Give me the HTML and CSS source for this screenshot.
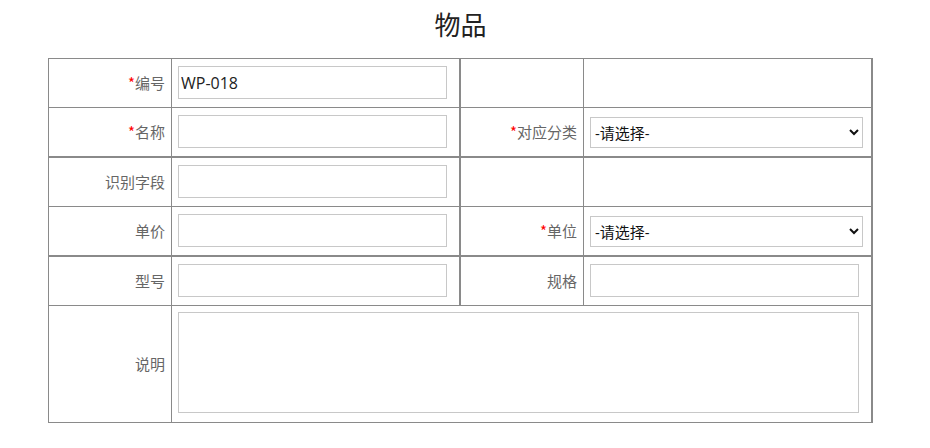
FILE: index.html
```html
<!DOCTYPE html>
<html lang="zh-CN">
<head>
<meta charset="utf-8">
<title>物品</title>
<link rel="stylesheet" href="styles.css">
</head>
<body>
<div class="page">
  <h1 class="title">物品</h1>
  <div class="form-grid">
    <div class="cell label r1"><span class="req">*</span>编号</div>
    <div class="cell field thick-r r1"><input class="txt" type="text" value="WP-018"></div>
    <div class="cell label r1"></div>
    <div class="cell field thick-r r1"></div>

    <div class="cell label r2"><span class="req">*</span>名称</div>
    <div class="cell field thick-r r2"><input class="txt" type="text"></div>
    <div class="cell label r2"><span class="req">*</span>对应分类</div>
    <div class="cell field sel-cell thick-r r2"><select class="sel"><option>-请选择-</option></select></div>

    <div class="cell label r1">识别字段</div>
    <div class="cell field thick-r r1"><input class="txt" type="text"></div>
    <div class="cell label r1"></div>
    <div class="cell field thick-r r1"></div>

    <div class="cell label r2">单价</div>
    <div class="cell field thick-r r2"><input class="txt" type="text"></div>
    <div class="cell label r2"><span class="req">*</span>单位</div>
    <div class="cell field sel-cell thick-r r2"><select class="sel"><option>-请选择-</option></select></div>

    <div class="cell label r1">型号</div>
    <div class="cell field thick-r r1"><input class="txt" type="text"></div>
    <div class="cell label r1">规格</div>
    <div class="cell field thick-r r1"><input class="txt" type="text"></div>

    <div class="cell label r1">说明</div>
    <div class="cell field area-cell thick-r r1"><textarea class="area"></textarea></div>
  </div>
</div>
</body>
</html>
```

FILE: styles.css
```css
html, body {
  margin: 0;
  padding: 0;
  background: #fff;
}

body {
  font-family: "Noto Sans CJK SC", "Noto Sans", sans-serif;
  color: #333;
}

.page {
  width: 825px;
  margin-left: 48px;
}

.title {
  margin: 0;
  padding: 6px 0 16px;
  font-size: 26px;
  line-height: 36px;
  font-weight: normal;
  text-align: center;
  color: #222;
}

.form-grid {
  display: grid;
  grid-template-columns: 123px 289px 123px 289px;
  grid-template-rows: 49px 50px 49px 50px 49px 117px;
  border-left: 1px solid #8a8a8a;
  border-top: 1px solid #8a8a8a;
  width: 825px;
  box-sizing: border-box;
}

.cell {
  box-sizing: border-box;
  border-right: 1px solid #8a8a8a;
  border-bottom: 1px solid #8a8a8a;
  display: flex;
  align-items: center;
}

.cell.r2 {
  border-bottom-width: 2px;
}

.cell.thick-r {
  border-right-width: 2px;
}

.label {
  justify-content: flex-end;
  padding-right: 6px;
  padding-bottom: 2px;
  font-size: 15px;
  color: #666;
}

.req {
  color: #f00;
}

.field {
  padding-left: 6px;
  padding-bottom: 1px;
}

.field.sel-cell {
  padding-bottom: 0;
  padding-top: 1px;
}

.area-cell {
  grid-column: 2 / 5;
  align-items: flex-start;
  padding-top: 6px;
  padding-bottom: 0;
}

.txt {
  box-sizing: border-box;
  width: 269px;
  height: 33px;
  margin: 0;
  padding: 1px 2px;
  border: 1px solid #c8c8c8;
  border-radius: 0;
  outline: none;
  font-family: "Open Sans", "Noto Sans CJK SC", sans-serif;
  font-size: 16px;
  color: #222;
  background: #fff;
}

.sel {
  box-sizing: border-box;
  width: 273px;
  height: 31px;
  margin: 0;
  border: 1px solid #c8c8c8;
  border-radius: 0;
  font-family: "Open Sans", "Noto Sans CJK SC", sans-serif;
  font-size: 15px;
  color: #111;
  background-color: #fff;
}

.area {
  box-sizing: border-box;
  width: 681px;
  height: 101px;
  margin: 0;
  border: 1px solid #c8c8c8;
  border-radius: 0;
  resize: none;
  outline: none;
  background: #fff;
}
```
